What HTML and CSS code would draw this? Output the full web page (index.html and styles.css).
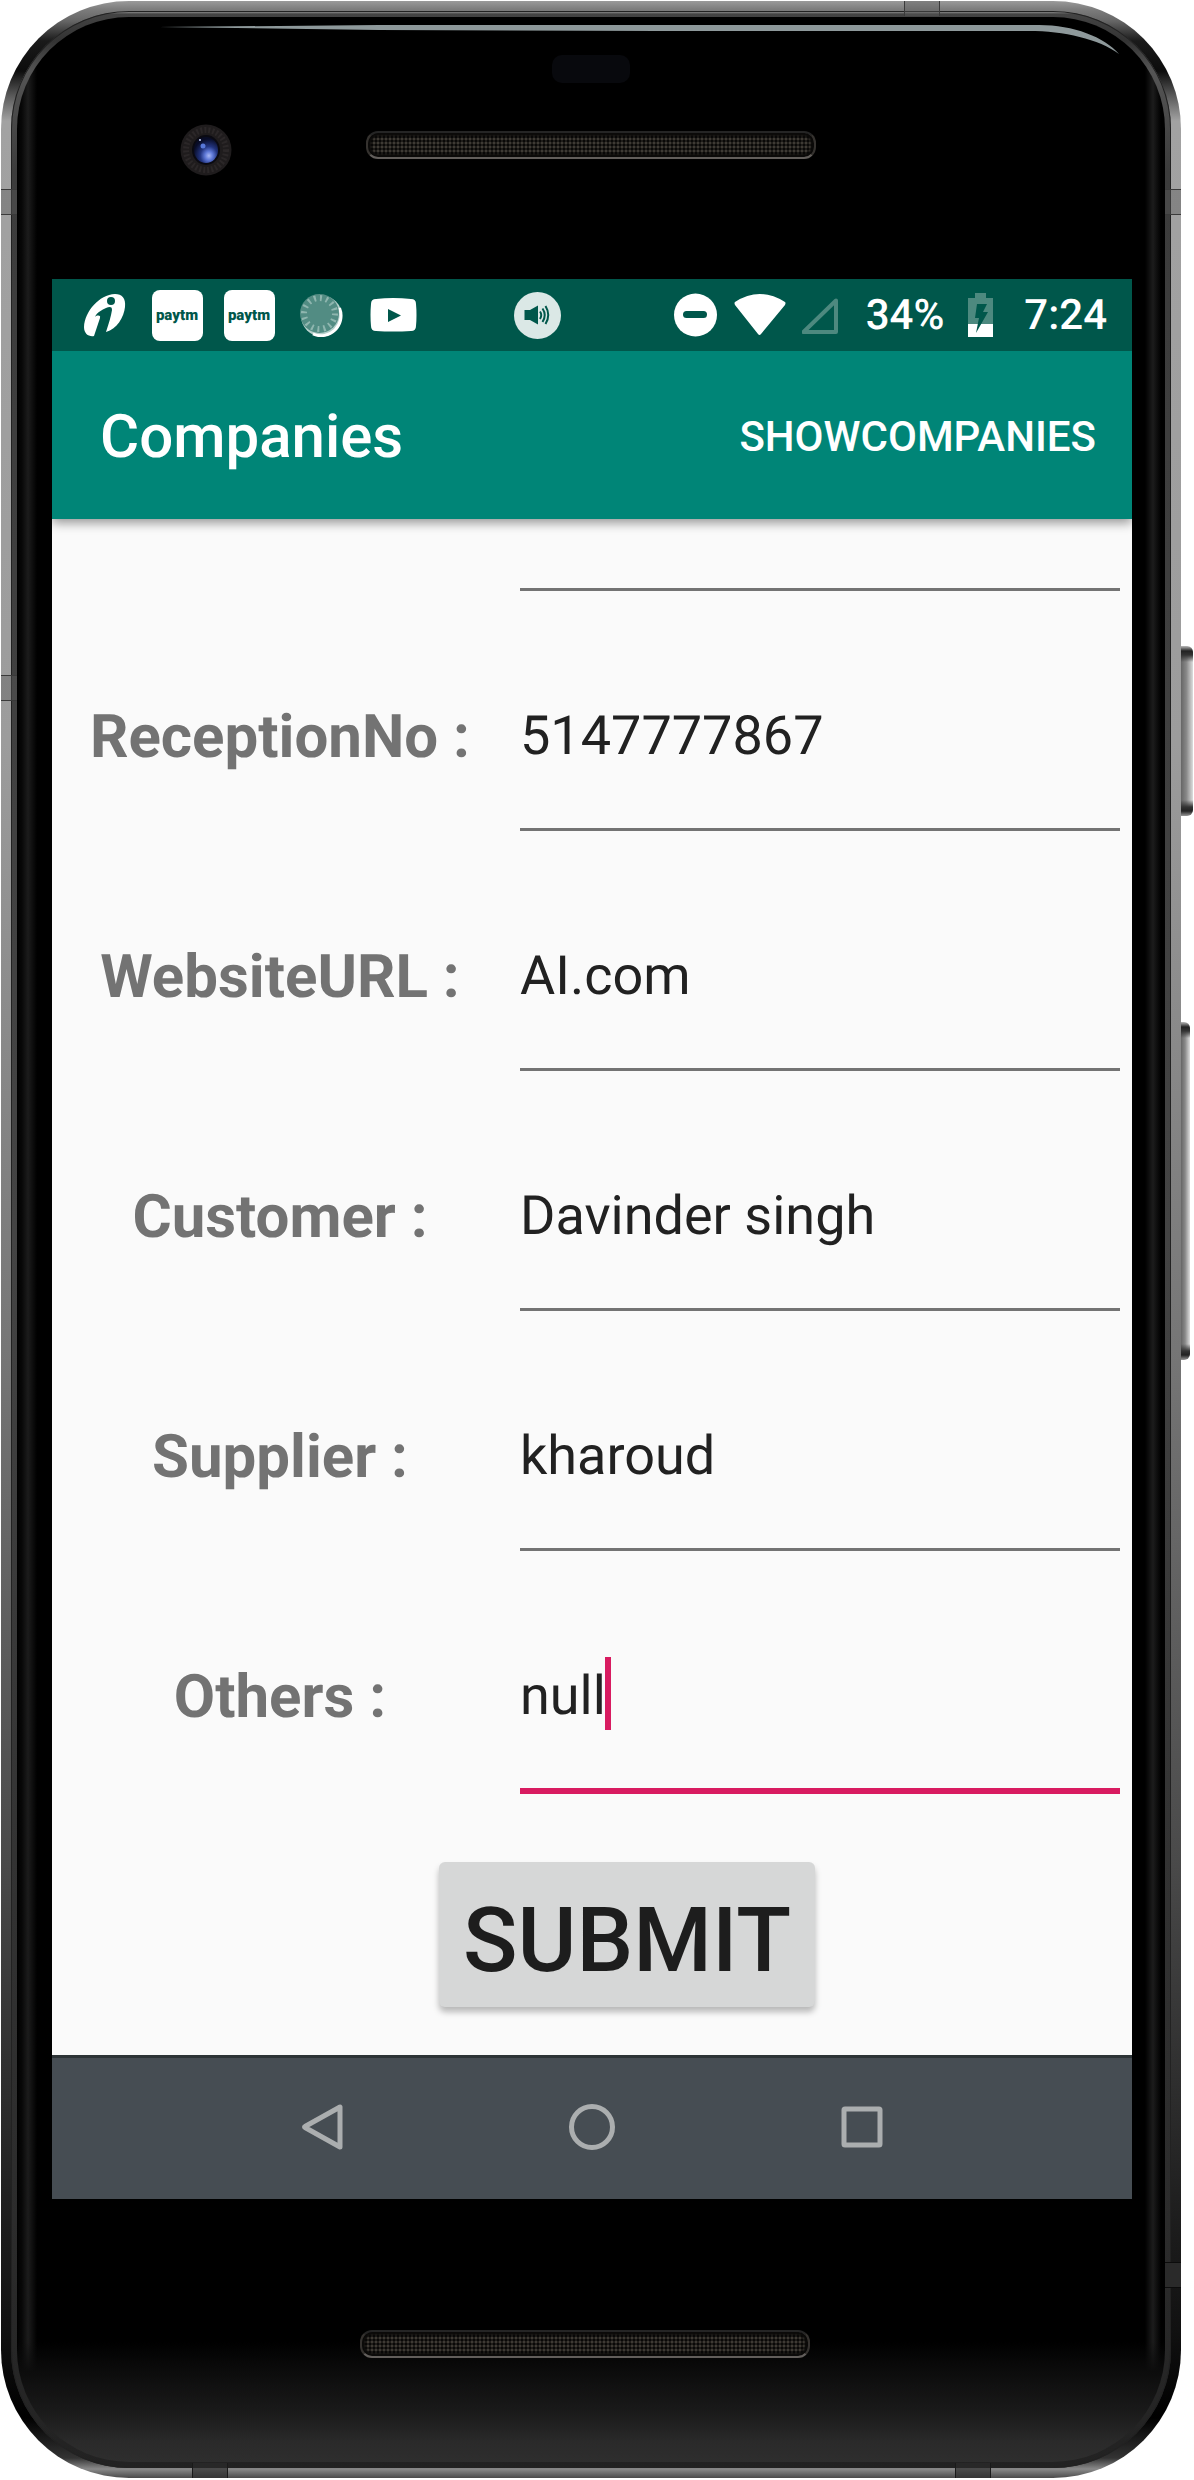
FILE: index.html
```html
<!DOCTYPE html>
<html lang="en">
<head>
<meta charset="utf-8">
<meta name="viewport" content="width=device-width, initial-scale=1">
<title>Companies</title>
<link rel="stylesheet" href="styles.css">
</head>
<body>
<div class="phone">
  <span class="side-button side-button-power"></span>
  <span class="side-button side-button-volume"></span>
  <span class="seam seam-left seam-high"></span>
  <span class="seam seam-left seam-mid"></span>
  <span class="seam seam-right seam-high"></span>
  <span class="seam seam-right seam-low"></span>
  <span class="seam seam-top"></span>
  <span class="seam seam-bottom seam-bottom-left"></span>
  <span class="seam seam-bottom seam-bottom-right"></span>
  <div class="rim">
    <div class="bezel">
      <svg class="glare" viewBox="0 0 960 32" preserveAspectRatio="none" aria-hidden="true">
        <path d="M0 2 L220 0 H880 C915 0 945 12 960 29 C940 14 905 6 870 6 H500 L220 5 Z" fill="#8e999b"/>
      </svg>
      <div class="bezel-top">
        <span class="sensor"></span>
        <div class="bezel-row">
          <svg class="camera" viewBox="0 0 52 52" aria-hidden="true">
            <defs>
              <radialGradient id="lens" cx="62%" cy="72%" r="65%">
                <stop offset="0" stop-color="#a9b8f5"/>
                <stop offset=".25" stop-color="#5f79d8"/>
                <stop offset=".55" stop-color="#22347f"/>
                <stop offset="1" stop-color="#080c26"/>
              </radialGradient>
            </defs>
            <circle cx="26" cy="26" r="25.500" fill="#1f1c1d"/>
            <circle cx="26" cy="26" r="20" fill="none" stroke="#2b2728" stroke-width="6" stroke-dasharray="2 2"/>
            <ellipse cx="26" cy="26" rx="14" ry="15" fill="#0a0a12"/>
            <ellipse cx="26" cy="26" rx="12" ry="13" fill="url(#lens)"/>
            <circle cx="23" cy="22" r="2.500" fill="#5878d8"/>
            <circle cx="20" cy="16" r="1" fill="#c9d4ff"/>
          </svg>
          <span class="grille"></span>
        </div>
      </div>

      <div class="screen">
        <div class="status-bar">
          <div class="notifications">
            <span class="cell">
              <svg width="42" height="43" viewBox="0 0 42 43" aria-hidden="true">
                <path fill="#fff" fill-rule="evenodd" d="M31 0C38 0 42 4 41 13C40 23 33 35 22 38C25 29 27 22 28 16C28 12 25 13 22 14C18 16 13 18 11 23C13 21 17 21 16 24L10 42C5 43 0 40 0 33C1 17 15 1 31 0Z"/>
                <ellipse cx="27" cy="7" rx="4" ry="4" fill="#00574b"/>
              </svg>
            </span>
            <span class="cell"><span class="paytm">paytm</span></span>
            <span class="cell"><span class="paytm">paytm</span></span>
            <span class="cell">
              <svg width="44" height="44" viewBox="0 0 44 44" aria-hidden="true">
                <circle cx="22.500" cy="23" r="20.500" fill="#b5d0cb"/>
                <path d="M40.500 15 A20 20 0 0 1 14 41" fill="none" stroke="#fff" stroke-width="3"/>
                <circle cx="20.500" cy="20.500" r="19.500" fill="#528c83"/>
                <circle cx="20.500" cy="20.500" r="15.500" fill="none" stroke="#8fb6af" stroke-width="6" stroke-dasharray="2 4.087"/>
              </svg>
            </span>
            <span class="cell">
              <svg width="47" height="34" viewBox="0 0 47 34" aria-hidden="true">
                <path fill="#fff" fill-rule="evenodd" d="M6 1Q23 -1 41 1Q46 1 46 6Q47 17 46 28Q46 33 41 33Q23 34 6 33Q1 33 1 28Q0 17 1 6Q1 1 6 1ZM18 11V24L31 17.500Z"/>
              </svg>
            </span>
            <span class="cell cell-media">
              <svg width="47" height="47" viewBox="0 0 47 47" aria-hidden="true">
                <circle cx="23.500" cy="23.500" r="23.500" fill="#dbe8e6"/>
                <path fill="#00574b" d="M10.500 18H16L24 13.500V32.500L16 28H10.500Z"/>
                <path fill="none" stroke="#00574b" stroke-width="2" d="M26 19.500Q28.500 23 26 27M28.500 16.500Q33 23 28.500 30M31.500 14Q37 23 31.500 32"/>
              </svg>
            </span>
          </div>
          <div class="system">
            <svg width="44" height="44" viewBox="0 0 44 44" aria-hidden="true">
              <circle cx="21.500" cy="22" r="21.500" fill="#fff"/>
              <rect x="9" y="18" width="24" height="7" rx="3.500" fill="#00574b"/>
            </svg>
            <svg width="52" height="44" viewBox="0 0 52 44" aria-hidden="true">
              <path fill="#fff" d="M1 9Q25.500 -7 51 9Q52 10 51 12L27 41Q25.500 43 24 41L1 12Q0 10 1 9Z"/>
            </svg>
            <svg width="48" height="44" viewBox="0 0 48 44" aria-hidden="true">
              <path fill="none" stroke="#4d897f" stroke-width="4" stroke-linejoin="round" d="M1.500 39H34V7.500Z"/>
            </svg>
            <span>34%</span>
            <svg width="48" height="44" viewBox="0 0 48 44" aria-hidden="true">
              <path fill="#4d897f" d="M15 0H26V5H33V31H8V5H15Z"/>
              <path fill="#fff" d="M8 31H33V44H8Z"/>
              <path fill="#00574b" d="M17 11H27L23 19H28L16 40L19 25H15Z"/>
            </svg>
            <time>7:24</time>
          </div>
        </div>

        <header class="app-bar">
          <h1 class="title">Companies</h1>
          <button class="menu-action" type="button">SHOWCOMPANIES</button>
        </header>

        <form class="form">
          <div class="row row-cut"><input class="field" type="text" aria-label="Previous field"></div>
          <div class="row"><label class="label" for="reception">ReceptionNo :</label><input class="field" id="reception" type="text" value="5147777867"></div>
          <div class="row"><label class="label" for="website">WebsiteURL :</label><input class="field" id="website" type="text" value="AI.com"></div>
          <div class="row"><label class="label" for="customer">Customer :</label><input class="field" id="customer" type="text" value="Davinder singh"></div>
          <div class="row"><label class="label" for="supplier">Supplier :</label><input class="field" id="supplier" type="text" value="kharoud"></div>
          <div class="row">
            <label class="label" for="others">Others :</label>
            <div class="active">
              <input class="field field-active" id="others" type="text" value="null">
              <span class="caret"></span>
            </div>
          </div>
          <div class="actions"><button class="submit" type="button">SUBMIT</button></div>
        </form>

        <nav class="nav-bar">
          <button class="nav-button" type="button" aria-label="Back">
            <svg width="48" height="48" viewBox="0 0 48 48" aria-hidden="true"><path d="M42 4V44L7 24.500Q6 24 7 23.500Z"/></svg>
          </button>
          <button class="nav-button" type="button" aria-label="Home">
            <svg width="48" height="48" viewBox="0 0 48 48" aria-hidden="true"><circle cx="24" cy="24" r="20.500"/></svg>
          </button>
          <button class="nav-button" type="button" aria-label="Recent apps">
            <svg width="48" height="48" viewBox="0 0 48 48" aria-hidden="true"><rect x="6" y="6" width="36" height="36" rx="1"/></svg>
          </button>
        </nav>
      </div>

      <div class="bezel-bottom"><span class="grille"></span></div>
    </div>
  </div>
</div>
</body>
</html>
```
FILE: styles.css
```css
* { box-sizing: border-box; }

body {
  margin: 0;
  background: #fff;
  font-family: Roboto, "Liberation Sans", sans-serif;
  text-rendering: geometricPrecision;
}

button {
  border: 0;
  background: none;
  font-family: inherit;
}

/* Handset body */
.phone {
  position: relative;
  margin: 1px 13px 1px 1px;
  padding: 10px;
  border-radius: 128px;
  background: linear-gradient(to bottom,
    #9a9a9a 0, #7d7d7d 8px, #666 20px, #1a1a1a 40px, #0c0c0c 70px,
    #5a5a5a 95px, #a2a2a2 120px, #9c9c9c 30%, #757575 55%, #4a4a4a 75%,
    #1c1c1c 90%, #111 94%, #000 calc(100% - 60px), #333 calc(100% - 20px),
    #8a8a8a calc(100% - 9px), #4a4a4a 100%);
}

.rim {
  padding: 6px;
  border-radius: 118px;
  background: linear-gradient(to bottom,
    #a8a8a8 0, #444 3px, #333 30px, #555 60px, #3c3c3c 160px,
    #444 50%, #333 75%, #2c2c2c 90%, #222 100%);
  box-shadow: inset 0 0 0 1px #222;
}

.bezel {
  position: relative;
  padding: 0 33px 0 35px;
  border-radius: 112px;
  background:
    linear-gradient(to top, #2e2e2e 0, #2a2a2a 20px, #1a1a1a 50px, #0c0c0c 90px, transparent 120px),
    linear-gradient(to right, #000 0, #080808 5px, #1c1c1c 11px, #000 20px, #000 calc(100% - 20px), #1c1c1c calc(100% - 12px), #000 calc(100% - 4px));
  background-color: #000;
}

.seam {
  position: absolute;
  background: #5a5a5a66;
  border: 0 solid #3a3a3a;
}
.seam-left, .seam-right { width: 16px; height: 26px; border-width: 1px 0; }
.seam-left { left: 0; }
.seam-right { right: 0; }
.seam-high { top: 188px; }
.seam-mid { top: 674px; }
.seam-low { bottom: 190px; background: #2a2a2a; border-color: #0c0c0c; }
.seam-top, .seam-bottom { width: 36px; height: 15px; border-width: 0 1px; }
.seam-top { top: 0; right: 241px; }
.seam-bottom { bottom: 0; background: #2c2c2caa; border-color: #1a1a1a; }
.seam-bottom-left { left: 191px; }
.seam-bottom-right { right: 190px; }

.side-button {
  position: absolute;
  border-radius: 0 6px 6px 0;
  background:
    linear-gradient(to bottom, #bbb 0, #222 5px, #333 9px, transparent 16px, transparent calc(100% - 16px), #333 calc(100% - 9px), #222 calc(100% - 5px), #999 100%),
    linear-gradient(to right, #666 0, #888 45%, #ddd 100%);
}
.side-button-power { left: 100%; top: 645px; width: 12px; height: 170px; }
.side-button-volume { left: 100%; top: 1021px; width: 9px; height: 338px; }

.glare {
  position: absolute;
  top: 8px;
  left: 142px;
  width: calc(100% - 188px);
  height: 32px;
}

.bezel-top {
  height: 262px;
  padding: 38px 2px 0 0;
}
.sensor {
  display: block;
  width: 78px;
  height: 28px;
  margin: 0 auto;
  border-radius: 10px;
  background: #08090d;
}
.bezel-row {
  display: grid;
  grid-template-columns: 1fr 450px 1fr;
  align-items: start;
  margin-top: 41px;
}
.bezel-row .grille { margin-top: 7px; }
.camera {
  width: 52px;
  height: 52px;
  justify-self: center;
  margin-right: 6px;
}
.grille {
  display: block;
  width: 450px;
  height: 28px;
  border: 2px solid #35322f;
  border-top-color: #252525;
  border-bottom-color: #625e5b;
  border-radius: 12px;
  background: radial-gradient(circle, #3e3a34 1px, #090807 2px) 0 0 / 4px 4px;
  box-shadow: inset 0 0 2px 3px #0b0a09;
}
.bezel-bottom {
  display: flex;
  justify-content: center;
  height: 263px;
  padding: 131px 14px 0 0;
}

/* Screen */
.screen {
  background: #fafafa;
}

.status-bar {
  display: flex;
  justify-content: space-between;
  align-items: center;
  height: 72px;
  padding: 0 25px 0 17px;
  background: #00574b;
  color: #fff;
  font-size: 42px;
  font-weight: 500;
}
.notifications { display: flex; }
.cell {
  display: flex;
  justify-content: center;
  align-items: center;
  width: 72px;
}
.cell-media { margin-left: 72px; }
.paytm {
  width: 51px;
  border-radius: 8px;
  background: #fff;
  color: #00574b;
  font-size: 15px;
  font-weight: 900;
  line-height: 51px;
  text-align: center;
}
.system {
  display: flex;
  align-items: center;
  gap: 16px;
}

.app-bar {
  position: relative;
  display: flex;
  justify-content: space-between;
  align-items: center;
  height: 168px;
  padding: 3px 36px 0 48px;
  background: #008577;
  box-shadow: 0 4px 10px #00000066;
  clip-path: inset(0 0 -20px 0);
  color: #fff;
}
.title {
  margin: 0;
  font-size: 60px;
  font-weight: 500;
}
.menu-action {
  padding: 0;
  color: inherit;
  font-size: 42px;
  font-weight: 500;
}

/* Form */
.row {
  display: grid;
  grid-template-columns: 39fr 50fr 1fr;
  align-items: start;
}
.label {
  padding: 110px 12px 0 0;
  color: #737373;
  font-size: 60px;
  font-weight: 700;
  line-height: 72px;
  text-align: center;
}
.field {
  grid-column: 2;
  width: 100%;
  height: 240px;
  padding: 54px 0 0;
  border: 0;
  border-bottom: 3px solid #737373;
  border-radius: 0;
  background: none;
  color: #212121;
  font-family: inherit;
  font-size: 54px;
  text-rendering: inherit;
  outline: 0;
}
.row-cut .field { height: 72px; }
.active {
  position: relative;
  display: flex;
}
.field-active {
  height: 243px;
  border-bottom: 6px solid #d81b60;
}
.caret {
  position: absolute;
  top: 106px;
  left: 85px;
  width: 6px;
  height: 73px;
  background: #d81b60;
}
.actions {
  display: flex;
  justify-content: center;
  padding: 68px 0 48px 70px;
}
.submit {
  min-width: 376px;
  height: 145px;
  padding: 11px 24px 0;
  border-radius: 6px;
  background: #d6d7d7;
  box-shadow: 0 5px 6px #00000044;
  color: #1d1d1d;
  font-size: 90px;
  font-weight: 500;
  text-rendering: inherit;
}

.nav-bar {
  display: flex;
  justify-content: center;
  height: 144px;
  padding-bottom: 3px;
  border-top: 3px solid #2d3436;
  background: #464d53;
}
.nav-button {
  display: flex;
  justify-content: center;
  align-items: center;
  width: 25%;
  padding: 0;
}
.nav-button svg {
  fill: none;
  stroke: #abaeaf;
  stroke-width: 5;
  stroke-linejoin: round;
}
```
